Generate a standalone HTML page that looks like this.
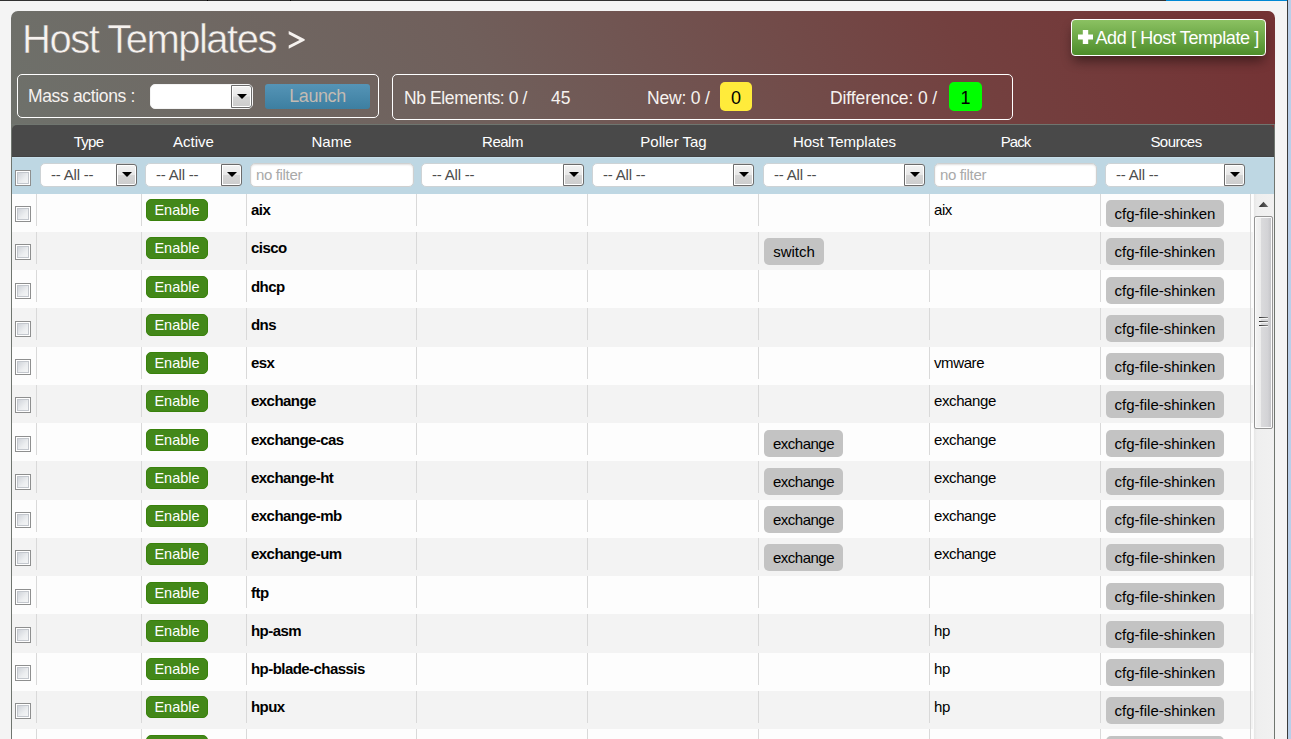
<!DOCTYPE html>
<html><head><meta charset="utf-8"><title>Host Templates</title>
<style>
html,body{margin:0;padding:0;}
body{width:1291px;height:739px;overflow:hidden;background:#f4f4f4;font-family:"Liberation Sans",sans-serif;position:relative;}
.abs{position:absolute;}
#topl{left:0;top:0;width:1166px;height:1px;background:#303030;}
#topb{left:1166px;top:0;width:121px;height:1px;background:#0088d4;}
#rline{left:1287px;top:0;width:1px;height:739px;background:#3a3a3a;}
#rblue{left:1288px;top:0;width:3px;height:739px;background:#b9cfe9;}
#panel{left:11px;top:11px;width:1264px;height:740px;border-radius:7px 7px 0 0;background:linear-gradient(62deg,#6e716b 0%,#705f5b 38%,#73403f 75%,#743234 100%);background-size:1264px 120px;background-repeat:no-repeat;background-color:#fdfdfd;}
#title{left:22px;top:16px;font-size:40px;line-height:46px;color:#f6f2ef;white-space:nowrap;letter-spacing:-1.5px;-webkit-text-stroke:0.5px #6f6a65;}
#gt{left:287px;top:19px;font-size:30px;line-height:40px;color:#f6f2ef;}
#addbtn{left:1071px;top:19px;width:193px;height:35px;border:1px solid #fff;border-radius:4px;background:linear-gradient(#8bc162,#4d8d2a);box-shadow:0 7px 12px -2px rgba(0,0,0,.45);color:#fff;font-size:18px;line-height:35px;white-space:nowrap;}
#massbox{left:17px;top:74px;width:360px;height:42px;border:1px solid #fff;border-radius:5px;}
#statbox{left:392px;top:74px;width:619px;height:44px;border:1px solid #fff;border-radius:5px;}
.wt{color:#f6f2ef;font-size:17.5px;line-height:20px;white-space:nowrap;}
.sel{background:#fff;border-radius:5px;box-sizing:border-box;border:1px solid #cdd3d6;}
.sel .dd{position:absolute;right:-1px;top:0;bottom:0;width:21px;box-sizing:border-box;border:1px solid #6c6c6c;border-radius:0 3px 3px 0;background:linear-gradient(#f3f3f3 0%,#e8e8e8 48%,#d6d6d6 52%,#cccccc 100%);box-shadow:inset 0 0 0 1px #fff;}
.sel .dd:after{content:"";position:absolute;left:4.5px;top:7px;border-left:5px solid transparent;border-right:5px solid transparent;border-top:5.5px solid #000;}
.sel .tx{position:absolute;left:10px;top:0;font-size:15px;line-height:22px;color:#4c4c4c;white-space:nowrap;letter-spacing:-0.2px;}
#launch{left:265px;top:84px;width:105px;height:25px;border-radius:3px;background:linear-gradient(#5594b6,#3d7fa1);color:#c3bbb3;font-size:18px;line-height:24px;text-align:center;letter-spacing:-0.4px;}
.badge{border-radius:5px;color:#000;font-size:18px;text-align:center;line-height:33px;height:29px;}
#thead{left:12px;top:125px;width:1262px;height:32px;background:#494949;border-radius:5px 5px 0 0;box-shadow:inset 0 -1px 0 #424242;}
.th{position:absolute;top:0;color:#fff;font-size:15px;line-height:33px;text-align:center;white-space:nowrap;}
#filt{left:12px;top:157px;width:1262px;height:37px;background:#bed7e3;box-shadow:inset 0 1px 0 #c8dfeb;}
.inp{background:#fff;border-radius:5px;box-sizing:border-box;border:1px solid #cfd0d0;box-shadow:inset 0 1px 2px rgba(0,0,0,.13);}
.inp span{position:absolute;left:5px;top:0;font-size:15px;line-height:22px;color:#a9a9a9;white-space:nowrap;letter-spacing:-0.35px;}
.cb{display:block;position:absolute;width:16px;height:16px;box-sizing:border-box;border:1px solid #8e8f8f;background:#fff;}
.cb:after{content:"";position:absolute;left:1px;top:1px;right:1px;bottom:1px;background:linear-gradient(135deg,#d0d4da,#eceef0 60%,#f4f5f6);border:1px solid #c3c7cd;box-sizing:border-box;}
#lborder{left:11px;top:124px;width:1264px;height:640px;box-sizing:border-box;border:1px solid #6f756f;}

.tbody{position:absolute;left:12px;top:194px;width:1241px;}
.row{position:relative;height:38.25px;}
.stripes{position:absolute;left:12px;top:194px;width:1241px;}
.st{position:absolute;left:0;width:1241px;background:#fdfdfd;}
.st.alt{background:#f3f3f3;}
.dv{position:absolute;top:0;width:1px;height:32px;background:#d9d9d9;}
.d1{left:24px}.d2{left:129px}.d3{left:234px}.d4{left:404px}.d5{left:575px}.d6{left:746px}.d7{left:917px}.d8{left:1088px}
.c{position:absolute;top:0;height:32px;border-left:1px solid transparent;box-sizing:border-box;}
.c0{left:0;width:24px;border-left:none;}
.c1{left:24px;width:105px;}
.c2{left:129px;width:105px;}
.c3{left:234px;width:170px;}
.c4{left:404px;width:171px;}
.c5{left:575px;width:171px;}
.c6{left:746px;width:171px;}
.c7{left:917px;width:171px;}
.c8{left:1088px;width:150px;}
.row .cb{left:3px;top:12px;}
.en{position:absolute;left:4px;top:5px;width:62px;height:22px;border-radius:5px;background:#438819;box-sizing:border-box;border:1px solid #39810c;color:#fff;font-size:14.5px;line-height:21px;text-align:center;}
.nm{position:absolute;left:4px;top:6px;font-size:15px;line-height:20px;font-weight:bold;color:#000;white-space:nowrap;letter-spacing:-0.55px;}
.pk{position:absolute;left:4px;top:6px;font-size:15px;line-height:20px;color:#000;white-space:nowrap;letter-spacing:-0.4px;}
.tag{position:absolute;left:5px;top:6px;height:27px;border-radius:5px;background:#c3c3c3;color:#000;font-size:15px;line-height:27px;text-align:center;white-space:nowrap;}
.src{width:118px;}
.t-switch{width:60px;}
.t-exchange{width:79px;letter-spacing:-0.5px;}
#sbtrack{left:1254px;top:194px;width:20px;height:560px;background:linear-gradient(90deg,#e6e6e6 0,#efefef 3px,#f1f1f1 100%);}
#sbgap{left:1253px;top:194px;width:1px;height:560px;background:#fbfbfb;}
#vline{left:1250px;top:194px;width:1px;height:560px;background:#d6d6d6;}
#sbthumb{left:1254px;top:216px;width:19px;height:213px;box-sizing:border-box;border:1px solid #959595;border-radius:2px;background:linear-gradient(90deg,#f4f4f4 0%,#ececec 36%,#dadadc 38%,#d3d3d6 75%,#c0c0c4 100%);box-shadow:inset 0 0 0 1px #fbfbfb;}
.sel.big{border-color:#f4f4f4;}
.sel.big .dd:after{top:8px;}

</style></head>
<body>
<div id="topl" class="abs"></div><div class="abs" style="left:207px;top:0;width:1px;height:1px;background:#000;box-shadow:83px 0 0 #000"></div><div id="topb" class="abs"></div><div id="rline" class="abs"></div><div id="rblue" class="abs"></div>
<div id="panel" class="abs"></div>
<div id="title" class="abs">Host Templates</div><svg class="abs" style="left:288px;top:30px" width="18" height="20" viewBox="288 30 18 20"><path d="M288.7 31 L304.7 39.2 V40.6 L288.7 48.7 V45.4 L299.6 39.9 L288.7 34.3 Z" fill="#f6f2ef"/></svg>
<div id="addbtn" class="abs"><svg class="abs" style="left:6px;top:10px" width="15" height="14" viewBox="0 0 15 14"><path d="M4.8 0h5.4v4.6h4.8v4.8h-4.8v4.6h-5.4v-4.6h-4.8v-4.8h4.8z" fill="#fff"/></svg><span class="abs" style="left:23.5px;top:1px;letter-spacing:-0.4px">Add [ Host Template ]</span></div>
<div id="massbox" class="abs"></div>
<div class="abs wt" style="left:28px;top:86px;letter-spacing:-0.35px">Mass actions :</div>
<div class="abs sel big" style="left:150px;top:84px;width:103px;height:25px"><span class="dd" style="right:0"></span></div>
<div id="launch" class="abs">Launch</div>
<div id="statbox" class="abs"></div>
<div class="abs wt" style="left:404px;top:88px;letter-spacing:-0.4px">Nb Elements: 0 /</div>
<div class="abs wt" style="left:551px;top:88px;">45</div>
<div class="abs wt" style="left:647px;top:88px;letter-spacing:-0.2px">New: 0 /</div>
<div class="abs badge" style="left:720px;top:82px;width:32px;background:#ffeb3b">0</div>
<div class="abs wt" style="left:830px;top:88px;letter-spacing:-0.1px">Difference: 0 /</div>
<div class="abs badge" style="left:949px;top:82px;width:33px;background:#00ff00">1</div>
<div id="thead" class="abs">
<div class="th" style="left:24px;width:105px;letter-spacing:-0.7px">Type</div>
<div class="th" style="left:129px;width:105px">Active</div>
<div class="th" style="left:234px;width:171px">Name</div>
<div class="th" style="left:405px;width:171px;letter-spacing:-0.5px">Realm</div>
<div class="th" style="left:576px;width:171px">Poller Tag</div>
<div class="th" style="left:747px;width:171px">Host Templates</div>
<div class="th" style="left:918px;width:171px;letter-spacing:-0.9px">Pack</div>
<div class="th" style="left:1089px;width:150px;letter-spacing:-0.55px">Sources</div>
</div>
<div id="filt" class="abs">
<span class="cb" style="left:3px;top:13px"></span>
<div class="abs sel" style="left:28px;top:6px;width:97px;height:24px"><span class="tx">-- All --</span><span class="dd"></span></div>
<div class="abs sel" style="left:133px;top:6px;width:97px;height:24px"><span class="tx">-- All --</span><span class="dd"></span></div>
<div class="abs inp" style="left:238px;top:6px;width:164px;height:24px"><span>no filter</span></div>
<div class="abs sel" style="left:409px;top:6px;width:163px;height:24px"><span class="tx">-- All --</span><span class="dd"></span></div>
<div class="abs sel" style="left:580px;top:6px;width:162px;height:24px"><span class="tx">-- All --</span><span class="dd"></span></div>
<div class="abs sel" style="left:751px;top:6px;width:162px;height:24px"><span class="tx">-- All --</span><span class="dd"></span></div>
<div class="abs inp" style="left:922px;top:6px;width:163px;height:24px"><span>no filter</span></div>
<div class="abs sel" style="left:1093px;top:6px;width:140px;height:24px"><span class="tx">-- All --</span><span class="dd"></span></div>
</div>
<div class="stripes">
<div class="st" style="top:0px;height:38px"><i class="dv d1"></i><i class="dv d2"></i><i class="dv d3"></i><i class="dv d4"></i><i class="dv d5"></i><i class="dv d6"></i><i class="dv d7"></i><i class="dv d8"></i></div>
<div class="st alt" style="top:38px;height:38px"><i class="dv d1"></i><i class="dv d2"></i><i class="dv d3"></i><i class="dv d4"></i><i class="dv d5"></i><i class="dv d6"></i><i class="dv d7"></i><i class="dv d8"></i></div>
<div class="st" style="top:76px;height:38px"><i class="dv d1"></i><i class="dv d2"></i><i class="dv d3"></i><i class="dv d4"></i><i class="dv d5"></i><i class="dv d6"></i><i class="dv d7"></i><i class="dv d8"></i></div>
<div class="st alt" style="top:114px;height:39px"><i class="dv d1"></i><i class="dv d2"></i><i class="dv d3"></i><i class="dv d4"></i><i class="dv d5"></i><i class="dv d6"></i><i class="dv d7"></i><i class="dv d8"></i></div>
<div class="st" style="top:153px;height:38px"><i class="dv d1"></i><i class="dv d2"></i><i class="dv d3"></i><i class="dv d4"></i><i class="dv d5"></i><i class="dv d6"></i><i class="dv d7"></i><i class="dv d8"></i></div>
<div class="st alt" style="top:191px;height:38px"><i class="dv d1"></i><i class="dv d2"></i><i class="dv d3"></i><i class="dv d4"></i><i class="dv d5"></i><i class="dv d6"></i><i class="dv d7"></i><i class="dv d8"></i></div>
<div class="st" style="top:229px;height:38px"><i class="dv d1"></i><i class="dv d2"></i><i class="dv d3"></i><i class="dv d4"></i><i class="dv d5"></i><i class="dv d6"></i><i class="dv d7"></i><i class="dv d8"></i></div>
<div class="st alt" style="top:267px;height:39px"><i class="dv d1"></i><i class="dv d2"></i><i class="dv d3"></i><i class="dv d4"></i><i class="dv d5"></i><i class="dv d6"></i><i class="dv d7"></i><i class="dv d8"></i></div>
<div class="st" style="top:306px;height:38px"><i class="dv d1"></i><i class="dv d2"></i><i class="dv d3"></i><i class="dv d4"></i><i class="dv d5"></i><i class="dv d6"></i><i class="dv d7"></i><i class="dv d8"></i></div>
<div class="st alt" style="top:344px;height:38px"><i class="dv d1"></i><i class="dv d2"></i><i class="dv d3"></i><i class="dv d4"></i><i class="dv d5"></i><i class="dv d6"></i><i class="dv d7"></i><i class="dv d8"></i></div>
<div class="st" style="top:382px;height:38px"><i class="dv d1"></i><i class="dv d2"></i><i class="dv d3"></i><i class="dv d4"></i><i class="dv d5"></i><i class="dv d6"></i><i class="dv d7"></i><i class="dv d8"></i></div>
<div class="st alt" style="top:420px;height:39px"><i class="dv d1"></i><i class="dv d2"></i><i class="dv d3"></i><i class="dv d4"></i><i class="dv d5"></i><i class="dv d6"></i><i class="dv d7"></i><i class="dv d8"></i></div>
<div class="st" style="top:459px;height:38px"><i class="dv d1"></i><i class="dv d2"></i><i class="dv d3"></i><i class="dv d4"></i><i class="dv d5"></i><i class="dv d6"></i><i class="dv d7"></i><i class="dv d8"></i></div>
<div class="st alt" style="top:497px;height:38px"><i class="dv d1"></i><i class="dv d2"></i><i class="dv d3"></i><i class="dv d4"></i><i class="dv d5"></i><i class="dv d6"></i><i class="dv d7"></i><i class="dv d8"></i></div>
<div class="st" style="top:535px;height:38px"><i class="dv d1"></i><i class="dv d2"></i><i class="dv d3"></i><i class="dv d4"></i><i class="dv d5"></i><i class="dv d6"></i><i class="dv d7"></i><i class="dv d8"></i></div>
</div>
<div class="tbody">
<div class="row"><div class="c c0"><span class="cb"></span></div><div class="c c1"></div><div class="c c2"><span class="en">Enable</span></div><div class="c c3"><span class="nm">aix</span></div><div class="c c4"></div><div class="c c5"></div><div class="c c6"></div><div class="c c7"><span class="pk">aix</span></div><div class="c c8"><span class="tag src">cfg-file-shinken</span></div></div>
<div class="row alt"><div class="c c0"><span class="cb"></span></div><div class="c c1"></div><div class="c c2"><span class="en">Enable</span></div><div class="c c3"><span class="nm">cisco</span></div><div class="c c4"></div><div class="c c5"></div><div class="c c6"><span class="tag t-switch">switch</span></div><div class="c c7"></div><div class="c c8"><span class="tag src">cfg-file-shinken</span></div></div>
<div class="row"><div class="c c0"><span class="cb"></span></div><div class="c c1"></div><div class="c c2"><span class="en">Enable</span></div><div class="c c3"><span class="nm">dhcp</span></div><div class="c c4"></div><div class="c c5"></div><div class="c c6"></div><div class="c c7"></div><div class="c c8"><span class="tag src">cfg-file-shinken</span></div></div>
<div class="row alt"><div class="c c0"><span class="cb"></span></div><div class="c c1"></div><div class="c c2"><span class="en">Enable</span></div><div class="c c3"><span class="nm">dns</span></div><div class="c c4"></div><div class="c c5"></div><div class="c c6"></div><div class="c c7"></div><div class="c c8"><span class="tag src">cfg-file-shinken</span></div></div>
<div class="row"><div class="c c0"><span class="cb"></span></div><div class="c c1"></div><div class="c c2"><span class="en">Enable</span></div><div class="c c3"><span class="nm">esx</span></div><div class="c c4"></div><div class="c c5"></div><div class="c c6"></div><div class="c c7"><span class="pk">vmware</span></div><div class="c c8"><span class="tag src">cfg-file-shinken</span></div></div>
<div class="row alt"><div class="c c0"><span class="cb"></span></div><div class="c c1"></div><div class="c c2"><span class="en">Enable</span></div><div class="c c3"><span class="nm">exchange</span></div><div class="c c4"></div><div class="c c5"></div><div class="c c6"></div><div class="c c7"><span class="pk">exchange</span></div><div class="c c8"><span class="tag src">cfg-file-shinken</span></div></div>
<div class="row"><div class="c c0"><span class="cb"></span></div><div class="c c1"></div><div class="c c2"><span class="en">Enable</span></div><div class="c c3"><span class="nm">exchange-cas</span></div><div class="c c4"></div><div class="c c5"></div><div class="c c6"><span class="tag t-exchange">exchange</span></div><div class="c c7"><span class="pk">exchange</span></div><div class="c c8"><span class="tag src">cfg-file-shinken</span></div></div>
<div class="row alt"><div class="c c0"><span class="cb"></span></div><div class="c c1"></div><div class="c c2"><span class="en">Enable</span></div><div class="c c3"><span class="nm">exchange-ht</span></div><div class="c c4"></div><div class="c c5"></div><div class="c c6"><span class="tag t-exchange">exchange</span></div><div class="c c7"><span class="pk">exchange</span></div><div class="c c8"><span class="tag src">cfg-file-shinken</span></div></div>
<div class="row"><div class="c c0"><span class="cb"></span></div><div class="c c1"></div><div class="c c2"><span class="en">Enable</span></div><div class="c c3"><span class="nm">exchange-mb</span></div><div class="c c4"></div><div class="c c5"></div><div class="c c6"><span class="tag t-exchange">exchange</span></div><div class="c c7"><span class="pk">exchange</span></div><div class="c c8"><span class="tag src">cfg-file-shinken</span></div></div>
<div class="row alt"><div class="c c0"><span class="cb"></span></div><div class="c c1"></div><div class="c c2"><span class="en">Enable</span></div><div class="c c3"><span class="nm">exchange-um</span></div><div class="c c4"></div><div class="c c5"></div><div class="c c6"><span class="tag t-exchange">exchange</span></div><div class="c c7"><span class="pk">exchange</span></div><div class="c c8"><span class="tag src">cfg-file-shinken</span></div></div>
<div class="row"><div class="c c0"><span class="cb"></span></div><div class="c c1"></div><div class="c c2"><span class="en">Enable</span></div><div class="c c3"><span class="nm">ftp</span></div><div class="c c4"></div><div class="c c5"></div><div class="c c6"></div><div class="c c7"></div><div class="c c8"><span class="tag src">cfg-file-shinken</span></div></div>
<div class="row alt"><div class="c c0"><span class="cb"></span></div><div class="c c1"></div><div class="c c2"><span class="en">Enable</span></div><div class="c c3"><span class="nm">hp-asm</span></div><div class="c c4"></div><div class="c c5"></div><div class="c c6"></div><div class="c c7"><span class="pk">hp</span></div><div class="c c8"><span class="tag src">cfg-file-shinken</span></div></div>
<div class="row"><div class="c c0"><span class="cb"></span></div><div class="c c1"></div><div class="c c2"><span class="en">Enable</span></div><div class="c c3"><span class="nm">hp-blade-chassis</span></div><div class="c c4"></div><div class="c c5"></div><div class="c c6"></div><div class="c c7"><span class="pk">hp</span></div><div class="c c8"><span class="tag src">cfg-file-shinken</span></div></div>
<div class="row alt"><div class="c c0"><span class="cb"></span></div><div class="c c1"></div><div class="c c2"><span class="en">Enable</span></div><div class="c c3"><span class="nm">hpux</span></div><div class="c c4"></div><div class="c c5"></div><div class="c c6"></div><div class="c c7"><span class="pk">hp</span></div><div class="c c8"><span class="tag src">cfg-file-shinken</span></div></div>
<div class="row"><div class="c c0"><span class="cb"></span></div><div class="c c1"></div><div class="c c2"><span class="en">Enable</span></div><div class="c c3"><span class="nm">iis</span></div><div class="c c4"></div><div class="c c5"></div><div class="c c6"></div><div class="c c7"></div><div class="c c8"><span class="tag src">cfg-file-shinken</span></div></div>
</div>
<div id="sbgap" class="abs"></div><div id="vline" class="abs"></div>
<div id="sbtrack" class="abs"></div>
<svg class="abs" style="left:1258px;top:201px" width="11" height="7" viewBox="0 0 11 7"><defs><linearGradient id="ag" x1="0" y1="0" x2="1" y2="0"><stop offset="0" stop-color="#2c2c2c"/><stop offset="1" stop-color="#6a6a6a"/></linearGradient></defs><path d="M0.7 6 L5.5 0.8 L10.3 6 Z" fill="url(#ag)"/></svg>
<div id="sbthumb" class="abs"></div>
<div class="abs" style="left:1259px;top:317px;width:9px;height:1px;background:linear-gradient(90deg,#2e2e2e,#8a8a8a);box-shadow:0 1px 0 #f6f6f6"></div>
<div class="abs" style="left:1259px;top:321px;width:9px;height:1px;background:linear-gradient(90deg,#2e2e2e,#8a8a8a);box-shadow:0 1px 0 #f6f6f6"></div>
<div class="abs" style="left:1259px;top:325px;width:9px;height:1px;background:linear-gradient(90deg,#2e2e2e,#8a8a8a);box-shadow:0 1px 0 #f6f6f6"></div>
<div id="lborder" class="abs"></div>
</body></html>
